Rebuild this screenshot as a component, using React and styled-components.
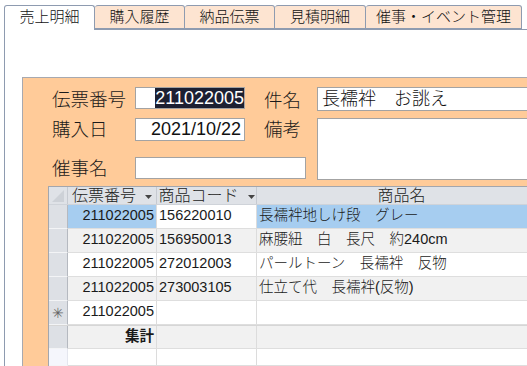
import React from "react";
import styled, { createGlobalStyle } from "styled-components";

const line = "#8e9bb0";
const jp = `"Liberation Sans", "Noto Sans CJK JP", sans-serif`;

const GlobalStyle = createGlobalStyle`
  html, body {
    margin: 0;
    background: #fff;
  }
  body {
    font-family: ${jp};
    color: #111;
  }
`;

const tabs = [
  { label: "売上明細", width: 91 },
  { label: "購入履歴", width: 90 },
  { label: "納品伝票", width: 90 },
  { label: "見積明細", width: 91 },
  { label: "催事・イベント管理", width: 156 },
];

const rows = [
  { no: "211022005", code: "156220010", name: "長襦袢地しけ段　グレー", selected: true },
  { no: "211022005", code: "156950013", name: "麻腰紐　白　長尺　約240cm", alt: true },
  { no: "211022005", code: "272012003", name: "パールトーン　長襦袢　反物" },
  { no: "211022005", code: "273003105", name: "仕立て代　長襦袢(反物)", alt: true },
];

export default function App() {
  return (
    <Screen>
      <GlobalStyle />
      <TabBar>
        {tabs.map((t, i) => (
          <Tab key={t.label} $active={i === 0} $width={t.width}>
            {t.label}
          </Tab>
        ))}
      </TabBar>

      <Page>
        <Section>
          <Form>
            <Label $row={1} $col={1} $h={22}>伝票番号</Label>
            <Field $row={1} $col={2} $h={22} $align="right">
              <Selected>211022005</Selected>
            </Field>
            <Label $row={1} $col={4} $h={24}>件名</Label>
            <Field $row={1} $col={5} $h={24}>長襦袢　お誂え</Field>

            <Label $row={2} $col={1} $h={20}>購入日</Label>
            <Field $row={2} $col={2} $h={23} $align="right" $pad={3}>
              2021/10/22
            </Field>
            <Label $row={2} $col={4} $h={20}>備考</Label>
            <Field $row="2 / span 2" $col={5} $h={62} />

            <Label $row={3} $col={1} $h={20}>催事名</Label>
            <Field $row={3} $col="2 / span 3" $h={22} $w={171} />
          </Form>

          <Sheet>
            <HeadRow>
              <Corner>
                <svg width="12" height="12" viewBox="0 0 12 12">
                  <path d="M12 0 L12 12 L0 12 Z" fill="#cdd1d7" />
                </svg>
              </Corner>
              <HeadCell>
                伝票番号
                <Arrow />
              </HeadCell>
              <HeadCell>
                商品コード
                <Arrow />
              </HeadCell>
              <HeadCell>商品名</HeadCell>
            </HeadRow>

            {rows.map((r, i) => (
              <Row key={i} $alt={r.alt}>
                <Selector />
                <Cell $align="right" $sel={r.selected}>{r.no}</Cell>
                <Cell $white={r.selected}>{r.code}</Cell>
                <Cell $sel={r.selected}>{r.name}</Cell>
              </Row>
            ))}

            <Row>
              <Selector $mark>✳</Selector>
              <Cell $align="right">211022005</Cell>
              <Cell />
              <Cell />
            </Row>

            <Row $alt $total>
              <Selector />
              <Cell $align="right" $bold>集計</Cell>
              <Cell />
              <Cell />
            </Row>

            <Row $blank>
              <Selector $blank />
              <Cell />
              <Cell />
              <Cell />
            </Row>
          </Sheet>
        </Section>
      </Page>
    </Screen>
  );
}

function Arrow() {
  return (
    <ArrowIcon width="7" height="4" viewBox="0 0 7 4">
      <path d="M0 0 H7 L3.5 4 Z" fill="#444" />
    </ArrowIcon>
  );
}

const Screen = styled.div`
  width: 527px;
  height: 366px;
  overflow: hidden;
  padding: 5px 0 0 4px;
  box-sizing: border-box;
  display: flex;
  flex-direction: column;
`;

const TabBar = styled.div`
  display: flex;
  align-items: flex-end;
  height: 24px;
  position: relative;
  z-index: 1;
`;

const Tab = styled.div`
  box-sizing: border-box;
  width: ${(p) => p.$width}px;
  height: ${(p) => (p.$active ? 25 : 24)}px;
  margin-bottom: ${(p) => (p.$active ? -1 : 0)}px;
  border: 1px solid ${line};
  border-bottom: ${(p) => (p.$active ? "none" : `1px solid ${line}`)};
  border-left: ${(p) => (p.$active ? `1px solid ${line}` : "none")};
  border-radius: 3px 3px 0 0;
  background: ${(p) => (p.$active ? "#fff" : "#fde4d1")};
  font-size: 15px;
  font-weight: 300;
  line-height: 22px;
  text-align: center;
  color: #111;
  white-space: nowrap;
`;

const Page = styled.div`
  flex: 1;
  border-top: 1px solid ${line};
  border-left: 1px solid ${line};
  padding: 47px 0 0 17px;
  display: flex;
`;

const Section = styled.div`
  flex: 1;
  background: #ffcb99;
  border-top: 1px solid #a7a9b0;
  border-left: 1px solid #a7a9b0;
  padding: 9px 0 0 0;
  display: flex;
  flex-direction: column;
`;

const Form = styled.div`
  display: grid;
  grid-template-columns: 82px 110px 20px 52px 260px;
  grid-template-rows: 31px 39px 23px;
  padding-left: 30px;
`;

const Label = styled.div`
  grid-row: ${(p) => p.$row};
  grid-column: ${(p) => p.$col};
  height: ${(p) => p.$h}px;
  display: flex;
  align-items: center;
  font-size: 18.5px;
  font-weight: 300;
  color: #1a1a1a;
  white-space: nowrap;
  margin-left: -1px;
`;

const Field = styled.div`
  grid-row: ${(p) => p.$row};
  grid-column: ${(p) => p.$col};
  align-self: start;
  justify-self: start;
  box-sizing: border-box;
  width: ${(p) => (p.$w ? `${p.$w}px` : "100%")};
  height: ${(p) => p.$h}px;
  background: #fff;
  border: 1px solid #a3a3a3;
  font-size: 18px;
  font-weight: 300;
  line-height: ${(p) => p.$h - 2}px;
  text-align: ${(p) => p.$align || "left"};
  padding: 0 ${(p) => p.$pad ?? 0}px 0 4px;
  white-space: nowrap;
  overflow: hidden;
  color: #111;
`;

const Selected = styled.span`
  display: inline-block;
  background: #1c2032;
  color: #fff;
  line-height: 20px;
  height: 20px;
  vertical-align: top;
`;

const Sheet = styled.div`
  margin: 6px 0 0 25px;
  flex: 1;
  background: #fff;
  border-top: 1px solid #a3a6ad;
  border-left: 1px solid #a3a6ad;
  display: flex;
  flex-direction: column;
`;

const columns = "19px 89px 100px 290px";

const HeadRow = styled.div`
  display: grid;
  grid-template-columns: ${columns};
  height: 17px;
  background: #dfe2e7;
  border-bottom: 1px solid #cfd3d9;
`;

const Corner = styled.div`
  display: flex;
  align-items: flex-end;
  justify-content: flex-end;
  padding: 0 3px 2px 0;
  border-right: 1px solid #c6cad1;
`;

const HeadCell = styled.div`
  display: flex;
  align-items: center;
  justify-content: center;
  gap: 9px;
  font-size: 16px;
  font-weight: 300;
  line-height: 17px;
  color: #222;
  border-right: 1px solid #c6cad1;
  white-space: nowrap;
  overflow: hidden;
`;

const ArrowIcon = styled.svg`
  flex: none;
  margin-top: 3px;
`;

const Row = styled.div`
  display: grid;
  grid-template-columns: ${columns};
  height: 24px;
  flex: ${(p) => (p.$blank ? 1 : "none")};
  box-sizing: border-box;
  background: ${(p) => (p.$alt ? "#f1f1f1" : "#fff")};
  border-bottom: 1px solid #dedede;
  border-top: ${(p) => (p.$total ? "1px solid #d6d6d6" : "none")};
`;

const Selector = styled.div`
  background: ${(p) => (p.$blank ? "#f5f6fc" : "#dde0e5")};
  border-right: 1px solid ${(p) => (p.$blank ? "#e4e6ee" : "#b5b9c0")};
  border-bottom: 1px solid #f3f4f6;
  margin-bottom: -1px;
  display: flex;
  align-items: center;
  justify-content: center;
  font-size: 14px;
  color: #666;
`;

const Cell = styled.div`
  background: ${(p) => (p.$sel ? "#a6cdf0" : p.$white ? "#fff" : "transparent")};
  border-right: 1px solid #dcdcdc;
  font-size: 14.5px;
  font-weight: ${(p) => (p.$bold ? 700 : 300)};
  line-height: 21px;
  text-align: ${(p) => p.$align || "left"};
  padding: 0 2px;
  white-space: nowrap;
  overflow: hidden;
  color: #1a1a1a;
`;
